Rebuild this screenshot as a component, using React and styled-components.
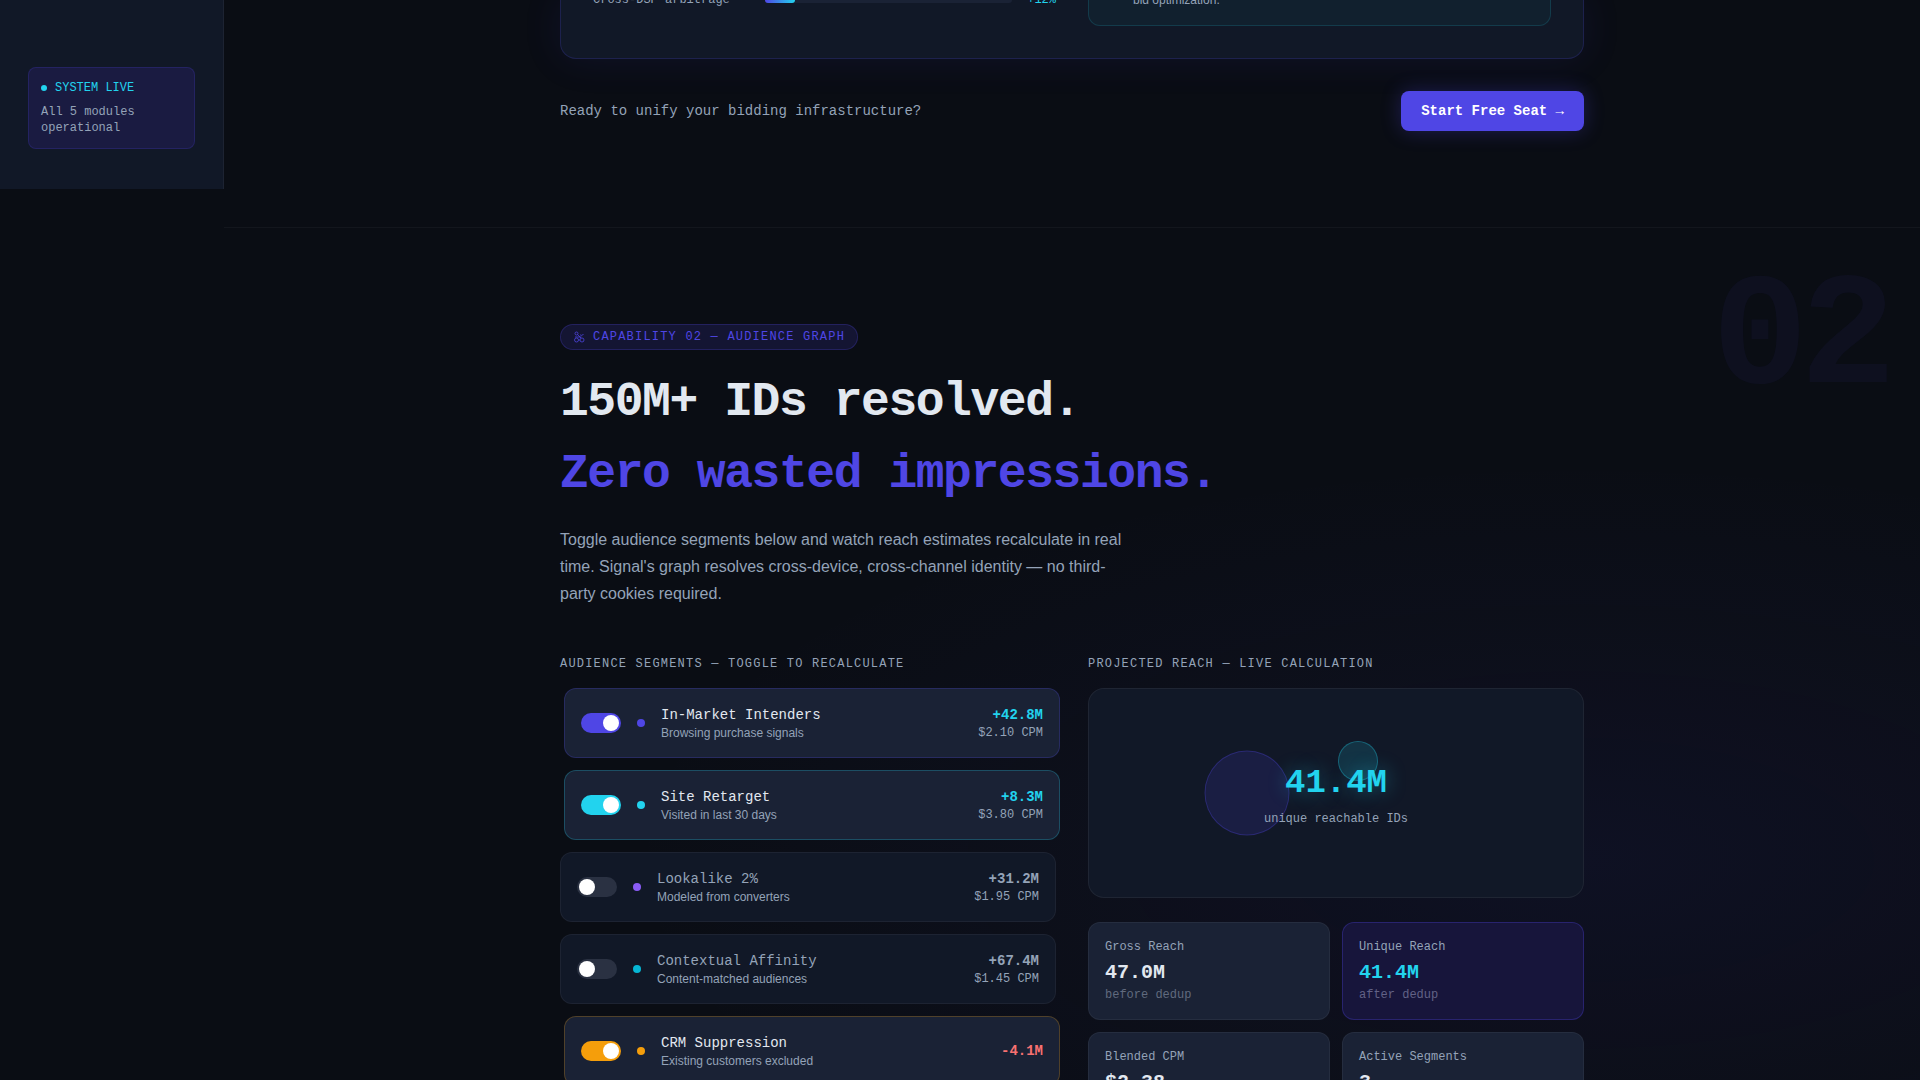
import React, { useState } from "react";
import styled, { createGlobalStyle } from "styled-components";

const mono = `"Liberation Mono", "DejaVu Sans Mono", monospace`;
const sans = `"Liberation Sans", Arial, sans-serif`;

const GlobalStyle = createGlobalStyle`
  *, *::before, *::after {
    box-sizing: border-box;
  }
  body {
    margin: 0;
    background: #0a0d14;
    color: #e2e8f0;
    font-family: ${sans};
  }
  h2, p {
    margin: 0;
  }
`;

const Page = styled.div`
  display: flex;
  align-items: flex-start;
  height: 100vh;
  overflow: hidden;
`;

const Sidebar = styled.aside`
  flex: 0 0 224px;
  padding: 67px 28px 40px;
  background: #111827;
  border-right: 1px solid rgba(255, 255, 255, 0.05);
`;

const StatusCard = styled.div`
  padding: 12px;
  border: 1px solid rgba(79, 70, 229, 0.2);
  border-radius: 8px;
  background: #1a1b41;
  font: 12px/16px ${mono};
  color: #94a3b8;
`;

const StatusTitle = styled.div`
  display: flex;
  align-items: center;
  gap: 8px;
  margin-bottom: 8px;
  color: #22d3ee;
  &::before {
    content: "";
    width: 6px;
    height: 6px;
    border-radius: 50%;
    background: currentColor;
  }
`;

const Main = styled.main`
  flex: 1;
  min-width: 0;
`;

const Section = styled.section`
  position: relative;
  padding: ${(p) => (p.$continued ? "0 64px 96px" : "96px 64px")};
  border-bottom: 1px solid rgba(255, 255, 255, 0.04);
  background: ${(p) =>
    p.$glow
      ? "radial-gradient(960px 400px at 80% 632px, rgba(79, 70, 229, 0.07), transparent)"
      : "none"};
`;

const Container = styled.div`
  max-width: 1024px;
  margin: 0 auto;
`;

const DemoCard = styled.div`
  display: grid;
  grid-template-columns: 1fr 1fr;
  align-items: start;
  gap: 32px;
  padding: 0 32px 32px;
  border: 1px solid rgba(79, 70, 229, 0.2);
  border-top: 0;
  border-radius: 0 0 16px 16px;
  background: #111827;
  box-shadow: 0 0 40px rgba(79, 70, 229, 0.1);
`;

const MetricRow = styled.div`
  display: flex;
  align-items: center;
  gap: 12px;
  margin-top: -8px;
  font: 12px/16px ${mono};
  color: #94a3b8;
`;

const MetricLabel = styled.span`
  width: 160px;
`;

const MetricTrack = styled.div`
  flex: 1;
  height: 6px;
  border-radius: 3px;
  background: #1a2235;
`;

const MetricFill = styled.div`
  height: 100%;
  border-radius: 3px;
  background: linear-gradient(90deg, #4f46e5, #22d3ee);
`;

const MetricValue = styled.span`
  width: 32px;
  text-align: right;
  color: #22d3ee;
`;

const Insight = styled.div`
  margin-top: -8px;
  padding: 0 16px 16px 44px;
  border: 1px solid rgba(34, 211, 238, 0.15);
  border-top: 0;
  border-radius: 0 0 12px 12px;
  background: #11202e;
  font-size: 12px;
  line-height: 17px;
  color: #94a3b8;
`;

const CtaRow = styled.div`
  display: flex;
  align-items: center;
  justify-content: space-between;
  margin-top: 32px;
  font: 14px/20px ${mono};
  color: #94a3b8;
`;

const CtaButton = styled.button`
  padding: 10px 20px;
  border: 0;
  border-radius: 8px;
  background: #4f46e5;
  box-shadow: 0 0 20px rgba(79, 70, 229, 0.3);
  font: bold 14px/20px ${mono};
  color: #fff;
  cursor: pointer;
`;

const GhostNumber = styled.div`
  position: absolute;
  top: 32px;
  right: 32px;
  font: bold 160px/1 ${mono};
  letter-spacing: -0.05em;
  color: rgba(79, 70, 229, 0.06);
  pointer-events: none;
`;

const Badge = styled.div`
  display: flex;
  align-items: center;
  gap: 8px;
  width: fit-content;
  padding: 4px 12px;
  border: 1px solid rgba(79, 70, 229, 0.25);
  border-radius: 13px;
  background: rgba(79, 70, 229, 0.15);
  font: 12px/16px ${mono};
  letter-spacing: 0.1em;
  text-transform: uppercase;
  color: #4f46e5;
`;

const Heading = styled.h2`
  margin-top: 16px;
  font: bold 48px/72px ${mono};
  letter-spacing: -0.03em;
  color: #e2e8f0;
  span {
    display: block;
    color: #4f46e5;
  }
`;

const Lead = styled.p`
  max-width: 576px;
  margin-top: 16px;
  font-size: 16px;
  line-height: 1.7;
  color: #94a3b8;
`;

const Columns = styled.div`
  display: grid;
  grid-template-columns: 1fr 1fr;
  gap: 32px;
  margin-top: 48px;
`;

const ColumnLabel = styled.div`
  margin-bottom: 16px;
  font: 12px/16px ${mono};
  letter-spacing: 0.1em;
  text-transform: uppercase;
  color: #94a3b8;
`;

const SegmentList = styled.div`
  display: flex;
  flex-direction: column;
  gap: 12px;
`;

const SegmentCard = styled.label`
  display: flex;
  align-items: center;
  gap: 16px;
  padding: 16px;
  border: 1px solid ${(p) => (p.$on ? p.$border : "rgba(255, 255, 255, 0.05)")};
  border-radius: 12px;
  background: ${(p) => (p.$on ? "#1a2235" : "#111827")};
  transform: ${(p) => (p.$on ? "translateX(4px)" : "none")};
  cursor: pointer;
`;

const Switch = styled.input`
  appearance: none;
  flex: none;
  width: 40px;
  height: 20px;
  margin: 0;
  padding: 2px;
  border-radius: 10px;
  background: #2a3142;
  cursor: pointer;
  &::before {
    content: "";
    display: block;
    width: 16px;
    height: 16px;
    border-radius: 50%;
    background: #fff;
  }
  &:checked {
    background: ${(p) => p.$color};
  }
  &:checked::before {
    margin-left: 20px;
  }
`;

const Dot = styled.span`
  flex: none;
  width: 8px;
  height: 8px;
  border-radius: 50%;
  background: ${(p) => p.$color};
`;

const SegmentText = styled.span`
  flex: 1;
  display: flex;
  flex-direction: column;
`;

const SegmentName = styled.span`
  font: 14px/20px ${mono};
  color: ${(p) => (p.$on ? "#e2e8f0" : "#94a3b8")};
`;

const SegmentNote = styled.span`
  font-size: 12px;
  line-height: 16px;
  color: #94a3b8;
`;

const SegmentStats = styled.span`
  display: flex;
  flex-direction: column;
  align-items: flex-end;
  font: 12px/16px ${mono};
  color: #94a3b8;
`;

const SegmentReach = styled.span`
  font: bold 14px/20px ${mono};
  color: ${(p) => p.$color};
`;

const ReachPanel = styled.div`
  position: relative;
  display: flex;
  flex-direction: column;
  align-items: center;
  justify-content: center;
  gap: 8px;
  min-height: 210px;
  margin-bottom: 24px;
  padding-top: 4px;
  border: 1px solid rgba(255, 255, 255, 0.06);
  border-radius: 16px;
  background: #111827;
`;

const Bubble = styled.div`
  position: absolute;
  transform: translate(-50%, -50%);
  border: 1px solid ${(p) => p.$border};
  border-radius: 50%;
  background: ${(p) => p.$fill};
`;

const ReachTotal = styled.div`
  position: relative;
  font: bold 34px/40px ${mono};
  color: #22d3ee;
  text-shadow: 0 0 20px rgba(34, 211, 238, 0.4);
`;

const ReachCaption = styled.div`
  position: relative;
  font: 12px/16px ${mono};
  color: #94a3b8;
`;

const StatGrid = styled.div`
  display: grid;
  grid-template-columns: 1fr 1fr;
  gap: 12px;
`;

const StatCard = styled.div`
  padding: 16px;
  border: 1px solid
    ${(p) => (p.$accent ? "rgba(79, 70, 229, 0.3)" : "rgba(255, 255, 255, 0.05)")};
  border-radius: 12px;
  background: ${(p) => (p.$accent ? "#17153b" : "#1a2235")};
  font: 12px/16px ${mono};
  color: #94a3b8;
`;

const StatValue = styled.div`
  margin-top: 4px;
  font: bold 20px/28px ${mono};
  color: ${(p) => (p.$accent ? "#22d3ee" : "#e2e8f0")};
`;

const StatNote = styled.div`
  color: ${(p) => (p.$accent ? "#626286" : "#606a7e")};
`;

const segments = [
  {
    id: "intenders",
    name: "In-Market Intenders",
    note: "Browsing purchase signals",
    reach: 42.8,
    cpm: 2.1,
    color: "#4f46e5",
    border: "rgba(79, 70, 229, 0.25)",
    bubble: { x: 32, y: 50, fill: "rgba(79, 70, 229, 0.15)", border: "rgba(79, 70, 229, 0.3)" },
  },
  {
    id: "retarget",
    name: "Site Retarget",
    note: "Visited in last 30 days",
    reach: 8.3,
    cpm: 3.8,
    color: "#22d3ee",
    border: "rgba(34, 211, 238, 0.25)",
    bubble: { x: 54.5, y: 35, fill: "rgba(34, 211, 238, 0.15)", border: "rgba(34, 211, 238, 0.3)" },
  },
  {
    id: "lookalike",
    name: "Lookalike 2%",
    note: "Modeled from converters",
    reach: 31.2,
    cpm: 1.95,
    color: "#8b5cf6",
    border: "rgba(139, 92, 246, 0.25)",
    bubble: { x: 65, y: 60, fill: "rgba(139, 92, 246, 0.15)", border: "rgba(139, 92, 246, 0.3)" },
  },
  {
    id: "contextual",
    name: "Contextual Affinity",
    note: "Content-matched audiences",
    reach: 67.4,
    cpm: 1.45,
    color: "#06b6d4",
    border: "rgba(6, 182, 212, 0.25)",
    bubble: { x: 48, y: 58, fill: "rgba(6, 182, 212, 0.15)", border: "rgba(6, 182, 212, 0.3)" },
  },
  {
    id: "crm",
    name: "CRM Suppression",
    note: "Existing customers excluded",
    reach: -4.1,
    color: "#f59e0b",
    border: "rgba(245, 158, 11, 0.25)",
  },
];

const reachColor = (segment, on) => {
  if (!on) return "#94a3b8";
  return segment.reach < 0 ? "#f87171" : "#22d3ee";
};

const GraphIcon = () => (
  <svg
    width="12"
    height="12"
    viewBox="0 0 24 24"
    fill="none"
    stroke="currentColor"
    strokeWidth="1.5"
    aria-hidden="true"
  >
    <circle cx="7" cy="5" r="3" />
    <circle cx="7" cy="18" r="4" />
    <circle cx="18" cy="18" r="4" />
    <path d="M9 7l7 7M14 7c2 3 5 2 7-1M4 12h13M11 18h3" />
  </svg>
);

const Segment = ({ segment, on, onToggle }) => (
  <SegmentCard $on={on} $border={segment.border}>
    <Switch
      type="checkbox"
      role="switch"
      checked={on}
      onChange={onToggle}
      $color={segment.color}
    />
    <Dot $color={segment.color} />
    <SegmentText>
      <SegmentName $on={on}>{segment.name}</SegmentName>
      <SegmentNote>{segment.note}</SegmentNote>
    </SegmentText>
    <SegmentStats>
      <SegmentReach $color={reachColor(segment, on)}>
        {segment.reach > 0 ? "+" : ""}
        {segment.reach.toFixed(1)}M
      </SegmentReach>
      {segment.cpm && <span>${segment.cpm.toFixed(2)} CPM</span>}
    </SegmentStats>
  </SegmentCard>
);

const Stat = ({ label, value, note, accent }) => (
  <StatCard $accent={accent}>
    {label}
    <StatValue $accent={accent}>{value}</StatValue>
    <StatNote $accent={accent}>{note}</StatNote>
  </StatCard>
);

export default function App() {
  const [active, setActive] = useState(["intenders", "retarget", "crm"]);

  const toggle = (id) =>
    setActive((ids) => (ids.includes(id) ? ids.filter((i) => i !== id) : [...ids, id]));

  const on = segments.filter((s) => active.includes(s.id));
  const paid = on.filter((s) => s.cpm);
  const gross = Math.max(0, on.reduce((sum, s) => sum + s.reach, 0));
  const unique = (gross * 0.88).toFixed(1);
  const paidReach = paid.reduce((sum, s) => sum + s.reach, 0);
  const blended = paidReach ? paid.reduce((sum, s) => sum + s.reach * s.cpm, 0) / paidReach : 0;

  return (
    <>
      <GlobalStyle />
      <Page>
        <Sidebar>
          <StatusCard>
            <StatusTitle>SYSTEM LIVE</StatusTitle>
            All 5 modules operational
          </StatusCard>
        </Sidebar>
        <Main>
          <Section $continued>
            <Container>
              <DemoCard>
                <MetricRow>
                  <MetricLabel>Cross-DSP arbitrage</MetricLabel>
                  <MetricTrack>
                    <MetricFill style={{ width: "12%" }} />
                  </MetricTrack>
                  <MetricValue>+12%</MetricValue>
                </MetricRow>
                <Insight>bid optimization.</Insight>
              </DemoCard>
              <CtaRow>
                <p>Ready to unify your bidding infrastructure?</p>
                <CtaButton type="button">Start Free Seat →</CtaButton>
              </CtaRow>
            </Container>
          </Section>
          <Section $glow>
            <GhostNumber aria-hidden="true">02</GhostNumber>
            <Container>
              <Badge>
                <GraphIcon />
                Capability 02 — Audience Graph
              </Badge>
              <Heading>
                150M+ IDs resolved.
                <span>Zero wasted impressions.</span>
              </Heading>
              <Lead>
                Toggle audience segments below and watch reach estimates recalculate in real time.
                Signal's graph resolves cross-device, cross-channel identity — no third-party
                cookies required.
              </Lead>
              <Columns>
                <div>
                  <ColumnLabel>Audience Segments — Toggle to Recalculate</ColumnLabel>
                  <SegmentList>
                    {segments.map((s) => (
                      <Segment
                        key={s.id}
                        segment={s}
                        on={active.includes(s.id)}
                        onToggle={() => toggle(s.id)}
                      />
                    ))}
                  </SegmentList>
                </div>
                <div>
                  <ColumnLabel>Projected Reach — Live Calculation</ColumnLabel>
                  <ReachPanel>
                    {paid.map((s) => {
                      const size = Math.max(40, Math.floor(s.reach * 2));
                      return (
                        <Bubble
                          key={s.id}
                          $fill={s.bubble.fill}
                          $border={s.bubble.border}
                          style={{
                            left: `${s.bubble.x}%`,
                            top: `${s.bubble.y}%`,
                            width: size,
                            height: size,
                          }}
                        />
                      );
                    })}
                    <ReachTotal>{unique}M</ReachTotal>
                    <ReachCaption>unique reachable IDs</ReachCaption>
                  </ReachPanel>
                  <StatGrid>
                    <Stat label="Gross Reach" value={`${gross.toFixed(1)}M`} note="before dedup" />
                    <Stat label="Unique Reach" value={`${unique}M`} note="after dedup" accent />
                    <Stat label="Blended CPM" value={`$${blended.toFixed(2)}`} note="weighted avg" />
                    <Stat label="Active Segments" value={on.length} note="of 5 total" />
                  </StatGrid>
                </div>
              </Columns>
            </Container>
          </Section>
        </Main>
      </Page>
    </>
  );
}
